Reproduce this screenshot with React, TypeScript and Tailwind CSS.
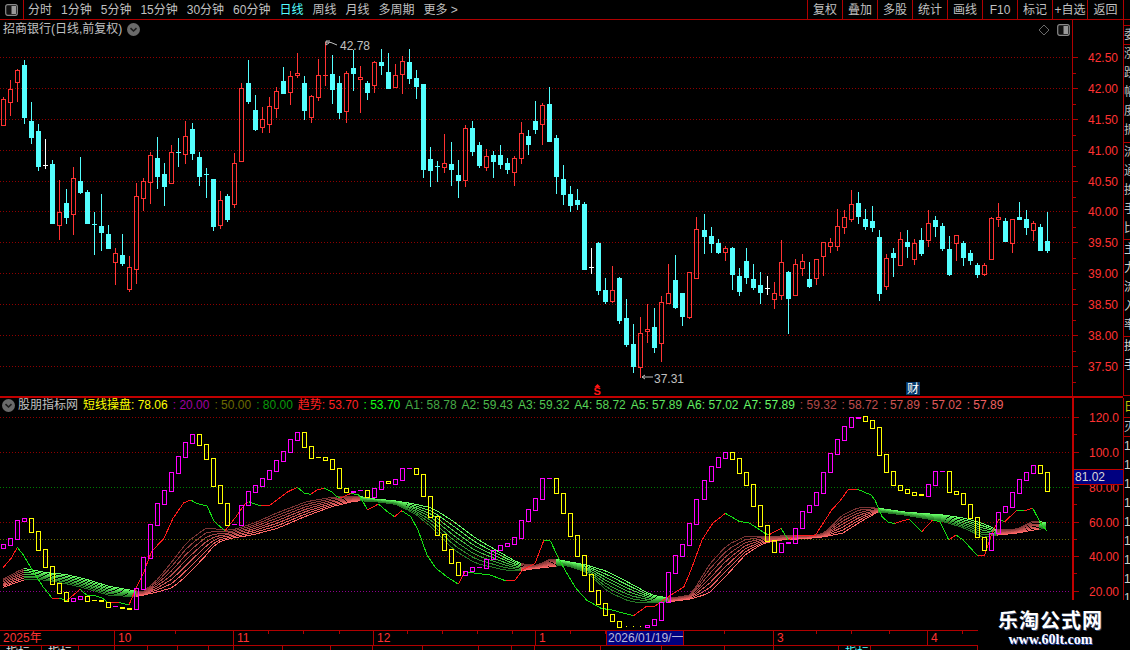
import React from "react";

type C = [number, number, number, number, number];
// high, body top, body bottom, low (zoomed by 3), kind: 0 red, 1 cyan, 2 white
const A: C[] = [
[170,178,254,258,0],[120,148,185,228,0],[87,91,125,185,0],[60,75,231,252,1],[186,243,291,312,1],[252,273,378,393,1],[297,376,376,387,2],[360,372,549,552,1],[420,517,555,600,0],[447,489,531,552,1],
[381,415,521,585,0],[351,423,456,462,1],[450,456,549,552,1],[516,553,553,645,1],[462,558,576,633,1],[555,582,624,624,1],[624,640,665,735,0],[582,645,669,678,1],[648,682,746,756,0],[429,469,686,732,0],
[414,424,473,513,0],[336,346,425,492,0],[291,354,408,447,1],[369,402,438,498,1],[315,337,428,428,0],[294,337,337,381,1],[243,289,341,372,0],[249,267,339,360,1],[336,351,408,438,1],[384,403,403,474,1],
[417,417,558,573,1],[453,481,554,567,0],[462,468,537,546,1],[339,370,491,504,0],[129,145,362,366,0],[60,129,183,192,1],[165,210,267,273,1],[201,238,260,279,0],[171,199,251,279,0],[141,154,205,234,0],
[81,123,159,159,1],[93,109,155,195,0],[39,99,104,114,0],[108,129,210,240,1],[165,169,231,249,0],[57,106,170,183,0],[6,106,106,138,0],[45,102,147,192,1],[108,129,216,237,1],[93,100,212,249,0],
[30,84,99,153,1],[78,112,116,219,0],[123,129,156,180,1],[63,67,134,159,0],[27,66,75,105,1],[39,96,144,147,1],[72,106,141,144,0],[48,64,101,162,0],[27,66,114,132,1],[90,114,138,177,1],
[132,132,387,414,1],[321,357,390,441,1],[363,379,379,426,1],[282,370,381,399,0],[306,372,387,438,1],[360,405,420,474,1],[255,265,419,441,0],[243,264,333,348,1],[306,315,375,384,1],[327,349,381,393,0],
[333,345,363,414,1],[315,345,372,387,1],[354,369,387,402,1],[348,355,396,438,0],[246,280,353,372,0],[270,288,312,345,1],[183,243,267,282,1],[189,196,251,315,0],[141,192,303,306,1],[285,294,408,462,1],
];
// offset 90
const B: C[] = [
[225,267,312,345,1],[288,312,345,366,1],[297,330,342,360,1],[336,342,537,540,1],[474,532,532,552,2],[456,459,600,615,1],[564,600,633,642,1],[528,601,633,639,0],[561,564,690,702,1],[627,684,762,771,1],
[702,762,828,849,1],[681,730,830,864,0],[642,718,724,759,0],[654,711,771,789,1],[618,637,758,816,0],[522,610,638,639,0],[495,570,651,657,1],[609,609,678,708,1],[546,547,680,687,0],[381,418,564,565,0],
[372,420,438,492,1],[411,438,459,489,1],[447,459,486,492,1],[468,475,485,513,0],[471,474,552,600,1],[534,558,603,618,1],[474,513,561,582,1],[522,567,591,600,1],[546,585,606,642,1],[558,595,595,615,2],
[576,610,626,657,0],[450,517,614,630,0],[543,546,624,732,1],[507,523,614,618,0],
];
// offset 180
const D: C[] = [
[222,244,263,288,0],[246,297,318,324,1],[237,238,293,315,0],[187,187,228,288,0],[174,187,197,219,0],[87,139,197,213,0],[90,112,140,162,0],[30,73,117,126,0],[36,69,108,132,1],[87,117,138,150,1],
[78,123,141,156,1],[150,171,339,363,1],[222,235,318,330,0],[204,219,231,291,1],[156,178,254,255,0],[150,186,198,234,1],[178,190,236,255,0],[144,180,219,228,1],[90,130,179,201,0],[108,120,138,171,1],
[129,138,204,213,1],[168,207,282,288,1],[166,166,189,243,0],[183,189,231,258,1],[210,219,240,255,1],[249,255,282,294,1],[249,256,282,288,0],[112,115,236,237,0],[69,112,116,141,0],[114,123,183,186,1],
[117,118,188,219,0],[66,112,116,120,1],[90,117,141,165,1],[123,130,149,183,0],[132,141,210,213,1],[96,183,210,219,1],
];

const candles = [
  ...A.map((c) => [40 + c[0] / 3, 40 + c[1] / 3, 40 + c[2] / 3, 40 + c[3] / 3, c[4]]),
  ...B.map((c) => [90 + c[0] / 3, 90 + c[1] / 3, 90 + c[2] / 3, 90 + c[3] / 3, c[4]]),
  ...D.map((c) => [180 + c[0] / 3, 180 + c[1] / 3, 180 + c[2] / 3, 180 + c[3] / 3, c[4]]),
];

const xOf = (i: number) => Math.floor(3.5 + 7.005 * i);
const COL = ["#ff3232", "#54ffff", "#ffffff"];

function Candle({ c, i }: { c: number[]; i: number }) {
  const x = xOf(i);
  const [h, t, b, l, k] = c.map(Math.round);
  const col = COL[k];
  if (b - t <= 1 || k === 1) {
    return (
      <g fill={col}>
        <rect x={x} y={h} width={1} height={Math.max(l - h, 1)} />
        <rect x={x - 2} y={t} width={5} height={b - t + 1} />
      </g>
    );
  }
  return (
    <g>
      <rect x={x} y={h} width={1} height={Math.max(t - h, 0)} fill={col} />
      <rect x={x} y={b} width={1} height={Math.max(l - b, 0)} fill={col} />
      <rect x={x - 1.5} y={t + 0.5} width={4} height={b - t} fill="none" stroke={col} strokeWidth={1} />
    </g>
  );
}

// indicator boxes: top, bottom, m/y
const M = "#ff00ff";
const Y = "#ffff00";
const boxes: [number, number, string][] = [
[544.3,547.7,M],[538,544.7,M],[520,539,M],[518,520.7,M],[518,531.7,Y],[531,549.7,Y],[549,566.7,Y],[566,583.7,Y],[583,592.7,Y],[592,600.7,Y],
[598,600.7,M],[596,598.7,M],[596,600.7,Y],[600.3,600.3,Y],[600,601,Y],[601.7,606.7,Y],[606.3,606.3,M],[606.5,607.7,Y],[607.5,608.7,Y],[588,608.7,M],
[557,588.7,M],[524,557.7,M],[503,524.7,M],[490,503.7,M],[472,490.7,M],[456,472.7,M],[442,456.7,M],[434,442.7,M],[434,444.7,Y],[444,458.7,Y],
[458,485.7,Y],[485,503.3,Y],[503,524.7,Y],[524.3,524.3,M],[505,524.7,M],[491,505.3,M],[485,491.7,M],[478,485.7,M],[470,478.7,M],[460,470.7,M],
[451,460.7,M],[439,451.7,M],[432,439.7,M],[432,446.7,Y],[446,457.7,Y],[457.3,457.3,Y],[457,459.7,Y],[459,468.7,Y],[468,488.3,Y],[488,491.7,Y],
[490.5,491.3,M],[490.3,490.3,M],[490,496.7,Y],[488,496.7,M],[481,488.7,M],[481,483.3,Y],[479,483.7,M],[468,479.7,M],[468.3,468.3,M],[468,474.3,Y],
[474,495.7,Y],[495.7,516.7,Y],[516,534.7,Y],[534,549.7,Y],[549,562.7,Y],[562,574.7,Y],[570.7,574.7,M],[567.3,571,M],[567.3,567.3,M],[558.7,567.7,M],
[550,559,M],[545.3,550.3,M],[543.3,545.7,M],[537.3,543.7,M],[520.3,537.7,M],[509.3,520.7,M],[498.3,509.7,M],[478.3,498.7,M],[478.3,478.3,M],[478.3,493.3,Y],
[493.3,513.3,Y],[513.3,535.7,Y],[535.3,555.7,Y],[555.3,574.7,Y],[574.3,590.7,Y],[590.3,604,Y],[603.3,614.7,Y],[614.3,621.3,Y],[621.3,626.7,Y],[-1,-1,Y],
[-1,-1,Y],[-1,-1,Y],[624.7,626.7,M],[619.3,624.7,M],[601.7,619.7,M],[572.3,602,M],[555.3,572.7,M],[544.3,555.7,M],[523.3,544.7,M],[498.7,523.7,M],
[480,499,M],[466.3,480.7,M],[457.3,466.7,M],[452,457.7,M],[452,458.7,Y],[458.3,472.7,Y],[472.3,484.7,Y],[484.3,505.7,Y],[505,525.7,Y],[525.3,541,Y],
[540.3,551.7,Y],[542.7,551.7,M],[542,542.6,M],[527.7,542.7,M],[511.3,527.7,M],[505.3,511.7,M],[492.3,505.3,M],[471.7,492.7,M],[453.3,471.7,M],[439.3,453.7,M],
[426.3,439.7,M],[417.3,426.7,M],[416.5,417.3,M],[416.3,420.7,Y],[420.3,427.7,Y],[427.3,454.7,Y],[454.3,471.7,Y],[471.3,484.7,Y],[484.7,489.7,Y],[489.3,492.7,Y],
[492.3,494.7,Y],[494.3,495.3,Y],[484.3,495.7,M],[471.3,484.7,M],[471.3,471.3,M],[471.3,491.7,Y],[491.3,493.7,Y],[493.3,504.3,Y],[504.3,517.7,Y],[517.3,536.7,Y],
[536.7,549.7,Y],[533.3,549.7,M],[511.7,533.3,M],[506.3,512,M],[492.3,506.7,M],[479.3,492.7,M],[472.3,479.7,M],[465.3,472.7,M],[465.3,472.7,Y],[472.3,490.7,Y],
];

const trend: [number, number][] = [
[3,567.7],[11.5,558],[17.3,547.3],[23.4,555],[31,568],[43,586.7],[52,598],[59.5,598],[66.7,600.7],[73.5,595],[80,589.3],[86.5,595],[95.5,595.7],[102.7,598.3],[108,602.7],[119,602.4],[129,605],[136,588.3],[144,571.7],[151.4,551.7],[164,538.3],[173,518.3],[183.8,502.7],[191,500],[196.4,503.3],[207,506],[214.4,521.7],[225,530.7],[236,516.7],[245,504],[248.6,501.7],[261,506],[270,505],[279.3,498.3],[288,491.7],[297.3,487.3],[304.5,493.3],[310.6,494.3],[317,490],[324.3,488.3],[331.5,491.7],[337,496.7],[340.5,498],[351,493.3],[358.6,495],[362,500],[367.6,510],[378.4,504],[387.4,511.7],[394.6,516.7],[401.8,510.7],[410.8,516.7],[418,530],[427,555],[436,568.3],[446.8,576.7],[458.4,584.3],[464.9,571.7],[475.7,573.3],[490,575],[506.3,581],[515.3,580],[522.5,570],[535,563.3],[544,540],[550.3,540.7],[558.6,558.3],[565,570],[575.8,588.3],[586.6,600],[601,608.3],[611.8,610],[633.5,615.7],[646,606.7],[655,606],[666,598.3],[684,586.7],[691,570],[702,540],[712.7,523.3],[725.4,513.3],[739.8,521.7],[748.8,522.7],[765,533.3],[768.6,535],[781,528.3],[788.4,540],[795.6,535],[804.6,535],[815.5,535],[831.7,510],[840.7,500],[847.9,490],[857,489],[871,495],[875,500],[882,516.7],[889,522.7],[894.7,523.3],[909,519],[921.8,531.7],[932.6,520],[939.8,521.7],[948.8,540],[956,535],[963.2,540],[977.6,555.7],[984.8,555],[992,533.3],[999,519.3],[1004.6,521.7],[1017.3,510],[1024.5,510.7],[1032.8,508.3],[1040.7,523.3],[1046.8,530.7],
];

const ribbon: [number, number, number][] = [
[3,579.3,587.3],[23.4,568.3,580],[36,570.7,579],[50.5,573.3,581],[63,574,583],[83,578.3,587.5],[108,586,595],[133.3,590.7,596.7],[144,591.7,595],[158.6,578.3,591.7],[173,560.5,587.5],[187.4,541.7,575],[205.4,528.3,556],[216.2,528.9,543],[230.6,530.5,538.3],[252,524,535],[277.5,512.7,528.3],[306.3,501.7,516],[331.5,497.3,506.7],[356.8,496,500.7],[374.8,499,501.5],[396.4,501,504.5],[414.4,504,513.3],[432.4,508,528],[454,521.7,550],[475.7,538.3,563.3],[504.5,555,570],[519,563.3,571],[537,565.7,568.3],[551.4,558.5,566.7],[565,561,565],[586.6,565,572],[608,571.7,591.7],[630,583.3,601.7],[651.5,595,603],[669.5,598.3,601.7],[691,595,599],[709,565,593.3],[727,545,575],[745,536.7,555],[763,536,543.3],[781,536,540],[810,535.7,538.3],[824.5,533.3,536.7],[842.5,515,533.3],[860.5,506.7,521.7],[878.5,508.3,511.7],[907.3,512.3,515.5],[943.4,515,521.5],[965,518.3,528.3],[983,523.5,537.3],[997.4,530,535],[1015.5,529.7,533.3],[1033.5,520.7,530],[1046,522.7,528.3],
];

function rib(x: number, k: number) {
  let j = 0;
  while (j < ribbon.length - 2 && ribbon[j + 1][0] < x) j++;
  const a = ribbon[j];
  const b = ribbon[j + 1];
  const f = Math.min(1, Math.max(0, (x - a[0]) / (b[0] - a[0])));
  const top = a[1] + (b[1] - a[1]) * f;
  const bot = a[2] + (b[2] - a[2]) * f;
  return top + ((bot - top) * k) / 6;
}
const RED_R = ["#7a3434", "#8c3b3b", "#a04343", "#b54b4b", "#cb5454", "#e45d5d", "#ff6666"];
const GRN_R = ["#66ff66", "#5ae85a", "#4ed04e", "#43b843", "#38a038", "#2e8a2e", "#267826"];

function Ribbon() {
  const out: React.ReactNode[] = [];
  for (let k = 0; k <= 6; k++) {
    for (let x = 3; x < 1046; x += 7) {
      const up = rib(x + 7, 3) <= rib(x, 3);
      out.push(<line key={k + "-" + x} x1={x} y1={rib(x, k)} x2={x + 7} y2={rib(x + 7, k)} stroke={up ? RED_R[k] : GRN_R[k]} />);
    }
  }
  return <g shapeRendering="crispEdges" strokeWidth={1}>{out}</g>;
}

function Trend() {
  return (
    <g shapeRendering="crispEdges" strokeWidth={1}>
      {trend.slice(1).map((p, i) => {
        const q = trend[i];
        return <line key={i} x1={q[0]} y1={q[1]} x2={p[0]} y2={p[1]} stroke={p[1] <= q[1] ? "#ff1a1a" : "#14e014"} />;
      })}
    </g>
  );
}

function Boxes() {
  return (
    <g shapeRendering="crispEdges">
      {boxes.map((b, i) => {
        const x = xOf(i);
        const t = Math.round(b[0]);
        const e = Math.round(b[1]);
        if (b[0] < 0) return null;
        if (e - t <= 1) return <rect key={i} x={x - 2} y={t} width={5} height={b[1] - b[0] >= 0.5 ? 2 : 1} fill={b[2]} />;
        return <rect key={i} x={x - 1.5} y={t + 0.5} width={4} height={e - t} fill="none" stroke={b[2]} />;
      })}
      {[89, 90, 91].map((i) => (
        <rect key={i} x={xOf(i)} y={626} width={1} height={1} fill={Y} />
      ))}
    </g>
  );
}

const priceY: [string, number][] = [["42.50",57],["42.00",88],["41.50",119],["41.00",150],["40.50",181],["40.00",211],["39.50",242],["39.00",273],["38.50",304],["38.00",335],["37.50",366]];
const indY: [string, number][] = [["120.0",417],["100.0",452],["80.00",487],["60.00",522],["40.00",556],["20.00",591]];

function Grid({ ys, colors }: { ys: number[]; colors?: string[] }) {
  return (
    <g shapeRendering="crispEdges">
      {ys.map((y, i) => (
        <line key={y} x1={0} x2={1070} y1={y + 0.5} y2={y + 0.5} stroke={colors ? colors[i] : "#8f0000"} strokeDasharray="1 2" />
      ))}
    </g>
  );
}

function Chevron() {
  return (
    <svg width="13" height="13" viewBox="0 0 13 13" className="shrink-0">
      <circle cx="6.5" cy="6.5" r="6.5" fill="#6a6a6a" />
      <path d="M3.5 5.2 L6.5 8 L9.5 5.2" fill="none" stroke="#1c1c1c" strokeWidth="1.6" />
    </svg>
  );
}
function PanelIcon() {
  return (
    <svg width="13" height="12" viewBox="0 0 13 12">
      <rect x="0.7" y="0.7" width="11.6" height="10.6" rx="2" fill="#111" stroke="#8a8a8a" strokeWidth="1.2" />
      <rect x="6.5" y="2" width="4.5" height="8" fill="#9a9a9a" />
    </svg>
  );
}

function MainSvg() {
  return (
    <svg width={1072} height={376} viewBox="0 20 1072 376" className="block">
      <Grid ys={priceY.map((p) => p[1])} />
      <g shapeRendering="crispEdges">
        {candles.map((c, i) => <Candle key={i} c={c as number[]} i={i} />)}
      </g>
      <g fill="none" stroke="#c0c0c0">
        <path d="M326 42 L331 42.5 L337 45" />
        <path d="M326 41 l4 0 M326 41 l0 4 l3 -2" />
        <path d="M642 377 L653 377 M642 377 l3 -2 M642 377 l3 2" />
      </g>
      <g fontSize="12" fill="#c0c0c0" fontFamily="'Liberation Sans', sans-serif">
        <text x={340} y={50}>42.78</text>
        <text x={654} y={383}>37.31</text>
      </g>
      <g fill="#ff1414">
        <path d="M597.5 384 l3 3 h-6 Z" />
        <text x={593.5} y={395} fontSize="11" fontWeight="700" fontFamily="'Liberation Sans', sans-serif">S</text>
      </g>
      <rect x={906} y={382} width={14} height={13} fill="#04396b" />
      <text x={907} y={393} fontSize="12" fill="#ffffff" fontFamily="'Noto Sans CJK SC', sans-serif">财</text>
      <g fill="none" stroke="#6a6a6a">
        <path d="M1044 25 L1049 30 L1044 35 L1039 30 Z" />
      </g>
    </svg>
  );
}

function IndSvg() {
  return (
    <svg width={1072} height={232} viewBox="0 398 1072 232" className="block">
      <Grid
        ys={indY.map((p) => p[1]).concat([539])}
        colors={["#8f0000", "#8f0000", "#007a00", "#8f0000", "#8f0000", "#8c008c", "#666600"]}
      />
      <Ribbon />
      <Trend />
      <Boxes />
    </svg>
  );
}

function AxisSvg({ items, height, top, minor }: { items: [string, number][]; height: number; top: number; minor: number[] }) {
  return (
    <svg width={50} height={height} viewBox={`1073 ${top} 50 ${height}`} className="block">
      <g shapeRendering="crispEdges" stroke="#b00000">
        {items.map((p) => <line key={p[0]} x1={1073} x2={1078} y1={p[1] + 0.5} y2={p[1] + 0.5} />)}
        {minor.map((y) => <line key={y} x1={1073} x2={1076} y1={y + 0.5} y2={y + 0.5} />)}
      </g>
      <g fontSize="12" fill="#ff3232" fontFamily="'Liberation Sans', sans-serif">
        {items.map((p) => <text key={p[0]} x={1088} y={p[1] + 5}>{p[0]}</text>)}
      </g>
    </svg>
  );
}

const navL = ["分时", "1分钟", "5分钟", "15分钟", "30分钟", "60分钟", "日线", "周线", "月线", "多周期", "更多 >"];
const navR = ["复权", "叠加", "多股", "统计", "画线", "F10", "标记", "+自选"];

const legend: [string, string][] = [
  ["短线操盘: 78.06", "#ffff00"],
  [": 20.00", "#a000a0"],
  [": 50.00", "#6b6b00"],
  [": 80.00", "#0a9a0a"],
  ["趋势: 53.70", "#ff2020"],
  [": 53.70", "#14ff14"],
  ["A1: 58.78", "#46a846"],
  ["A2: 59.43", "#4cb84c"],
  ["A3: 59.32", "#52c852"],
  ["A4: 58.72", "#58d658"],
  ["A5: 57.89", "#5ee25e"],
  ["A6: 57.02", "#63ee63"],
  ["A7: 57.89", "#68f868"],
  [": 59.32", "#b04848"],
  [": 58.72", "#c04e4e"],
  [": 57.89", "#d05454"],
  [": 57.02", "#e05a5a"],
  [": 57.89", "#ee6060"],
];

const cells: [string, number][] = [["2025年", 114], ["10", 119], ["11", 140], ["12", 162], ["1", 238], ["3", 154], ["4", 51]];
const smallTicks = [175, 268, 303, 339, 407, 442, 477, 512, 570, 605, 640, 683, 724, 816, 851, 889, 962];
const bottomCuts: [number, string, string][] = [
  [42, "指标", "text-[#e0e0e0]"], [37, "指标", "text-[#e0e0e0]"], [36, "", ""], [33, "", ""], [30, "", ""], [31, "", ""], [25, "", ""],
  [49, "", ""], [48, "", ""], [42, "", ""], [50, "", ""], [56, "", ""], [33, "", ""], [23, "", ""], [66, "", ""], [61, "", ""], [63, "", ""],
  [49, "", ""], [65, "", ""], [32, "指标", "text-[#54ffff]"], [107, "", ""],
];

function Strip({ sections }: { sections: [number, string, string][] }) {
  return (
    <div className="w-[7px] shrink-0 overflow-hidden border-l border-[#b00000]">
      {sections.map((s, i) => (
        <div key={i} style={{ height: s[0] }} className={`overflow-hidden border-b border-[#b00000] ${s[2]}`}>
          <div className="w-[12px] text-[12px] leading-[19px] break-all">{s[1]}</div>
        </div>
      ))}
    </div>
  );
}

export default function App() {
  return (
    <div className="relative h-[650px] w-[1130px] overflow-hidden bg-black text-[12px] leading-[14px] text-[#c0c0c0] font-['Liberation_Sans','Noto_Sans_CJK_SC',sans-serif]">
      {/* top bar */}
      <div className="flex h-[20px] items-stretch border-b border-[#b00000]">
        <div className="flex w-[24px] shrink-0 items-center justify-center border-r border-[#b00000]">
          <PanelIcon />
        </div>
        <div className="flex flex-1 items-center gap-[9px] pl-[4px]">
          {navL.map((n) => (
            <span key={n} className={n === "日线" ? "text-[#54ffff]" : ""}>{n}</span>
          ))}
        </div>
        {navR.map((n) => (
          <div key={n} className="flex w-[35px] items-center justify-center border-l border-[#b00000] whitespace-nowrap">{n}</div>
        ))}
        <div className="flex w-[37px] items-center justify-center border-l border-r border-[#b00000]">返回</div>
        <div className="w-[6px]" />
      </div>

      {/* main panel */}
      <div className="flex h-[376px]">
        <div className="relative w-[1072px] shrink-0">
          <MainSvg />
          <div className="absolute left-[3px] top-[2px] flex items-center gap-[5px]">
            <span>招商银行(日线,前复权)</span>
            <Chevron />
          </div>
          <div className="absolute right-[2px] top-[4px]"><PanelIcon /></div>
        </div>
        <div className="w-[51px] shrink-0 border-l border-[#b00000]">
          <AxisSvg items={priceY} height={376} top={20} minor={[73, 104, 135, 166, 197, 227, 258, 289, 320, 351, 382]} />
        </div>
        <Strip
          sections={[
            [6, "", ""],
            [19, "委", "text-[#c0c0c0]"],
            [98, "涨跌幅度振", "text-[#c0c0c0]"],
            [97, "流通换手比", "text-[#c0c0c0]"],
            [97, "主力流入率", "text-[#d0d0d0]"],
            [59, "换手", "text-[#d0d0d0]"],
          ]}
        />
      </div>

      {/* divider */}
      <div className="h-[2px] w-[1123px] bg-[#c00000]" />

      {/* indicator panel */}
      <div className="flex h-[232px]">
        <div className="relative w-[1072px] shrink-0">
          <IndSvg />
          <div className="absolute left-[2px] top-0 flex h-[14px] items-center whitespace-nowrap">
            <Chevron />
            <span className="ml-[3px] mr-[5px]">股朋指标网</span>
            <div className="flex gap-[5px]">
              {legend.map((l, i) => (
                <span key={i} style={{ color: l[1] }}>{l[0]}</span>
              ))}
            </div>
          </div>
        </div>
        <div className="relative w-[51px] shrink-0 border-l-2 border-[#c00000]">
          <AxisSvg items={indY} height={232} top={398} minor={[434, 469, 504, 539, 573]} />
          <div className="absolute left-0 top-[71px] flex h-[16px] w-[49px] items-center border-y border-[#c00000] bg-[#000080] pl-[1px] text-[#d8d8d8]">81.02</div>
        </div>
        <Strip
          sections={[
            [20, "日", "text-[#c8c800]"],
            [19, "灭", "text-[#c0c0c0]"],
            [193, "1111111111", "text-[#d0d0d0]"],
          ]}
        />
      </div>

      {/* time axis */}
      <div className="relative flex h-[16px] w-[978px] border-y border-[#b00000] text-[#ff3232]">
        {cells.map((c, i) => (
          <div key={c[0]} style={{ width: c[1] }} className={`shrink-0 pl-[3px] leading-[14px] ${i ? "border-l border-[#b00000]" : ""}`}>{c[0]}</div>
        ))}
        <svg width={978} height={3} className="absolute left-0 top-0">
          {smallTicks.map((x) => <rect key={x} x={x} y={0} width={1} height={3} fill="#b00000" />)}
        </svg>
        <div className="absolute left-[606px] top-0 h-[14px] w-[78px] border-x border-[#b00000] bg-[#000080] pl-[1px] text-[#b8b8d8] whitespace-nowrap">2026/01/19/一</div>
      </div>

      {/* bottom tabs, cut off by the window */}
      <div className="flex h-[4px] w-[978px] overflow-hidden">
        {bottomCuts.map((c, i) => (
          <div key={i} style={{ width: c[0] }} className={`shrink-0 overflow-hidden border-r border-[#b00000] pl-[6px] leading-[14px] ${c[2]}`}>
            {c[1]}
          </div>
        ))}
      </div>

      {/* watermark */}
      <div className="absolute bottom-0 right-0 flex h-[50px] w-[152px] flex-col items-center bg-black pr-[7px] pt-[8px] text-white">
        <span className="text-[20px] font-bold leading-[24px] tracking-[1px] [text-shadow:1px_1px_0_#334466] font-['Noto_Sans_CJK_SC',sans-serif]">乐淘公式网</span>
        <span className="text-[14px] font-bold leading-[16px] [text-shadow:1px_1px_0_#2244aa] font-['Liberation_Serif',serif]">www.60lt.com</span>
      </div>
    </div>
  );
}
